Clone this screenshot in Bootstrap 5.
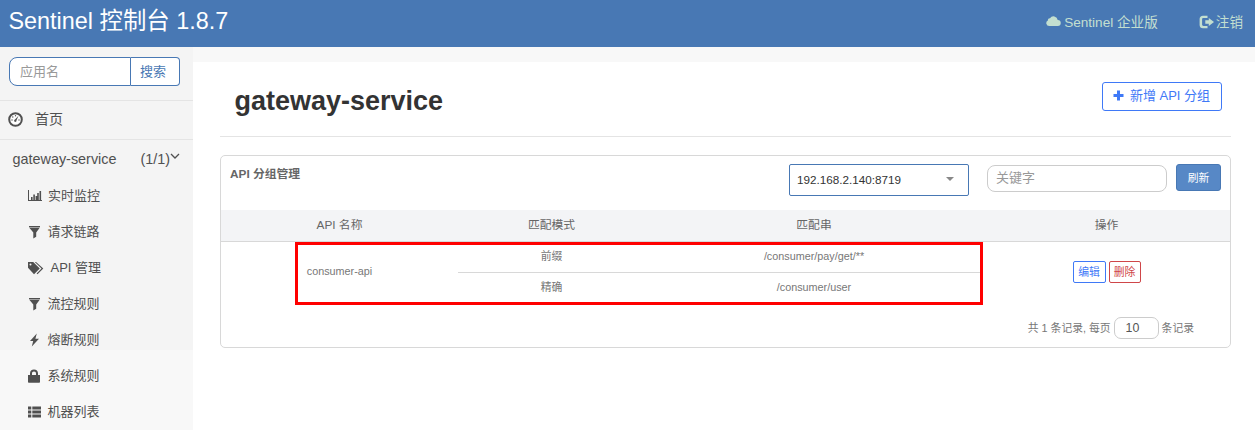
<!DOCTYPE html>
<html lang="zh-CN">
<head>
<meta charset="utf-8">
<meta name="viewport" content="width=device-width, initial-scale=1">
<title>Sentinel 控制台</title>
<link href="https://cdn.jsdelivr.net/npm/bootstrap@5.3.0/dist/css/bootstrap.min.css" rel="stylesheet">
<style>
body{font-family:"Liberation Sans","Noto Sans CJK SC",sans-serif;font-size:13px;color:#333;height:430px;overflow:hidden}
.topbar{background:#4878b4;height:47px;padding:0 11px 0 8.5px}
.brand{font-size:23.4px;line-height:42px;color:#fff}
.toplinks{font-size:13.6px;line-height:44px;height:44px;color:#c3dfd0;gap:41px;margin-top:1px;margin-right:1px}
.toplinks span{display:flex;align-items:center}
.icon-cloud{margin:-5px 3px 0 0}
.icon-out{margin:-2px 1px 0 0}
.side{width:193px;height:383px;background:linear-gradient(#f4f4f4 303px,#f8f8f8 303px);color:#505050}
.searchbox{padding:10px 13px 14px 9px;border-bottom:1px solid #e4e4e4}
.searchbox .form-control{height:29px;font-size:13px;border-color:#4878b4;border-radius:8px 0 0 8px;padding:0 10px 1px;width:122px;flex:none}
.searchbox .btn{height:29px;font-size:13px;border-color:#4878b4;border-left:0;color:#4878b4;background:#fff;border-radius:0 4px 4px 0;padding:0 4px 0 0;width:49px;flex:none;line-height:26px}
.form-control::placeholder{color:#999;opacity:1}
.home{height:39px;padding:0 0 2px 8px;font-size:14px;border-bottom:1px solid #e4e4e4;gap:12px}
.appname{height:38px;font-size:14.4px;padding:2px 13px 0 12.5px}
.appname svg{margin-top:-7px}
.menuitem{height:36px;padding:0 0 1px 27px}
.menuitem svg{margin-right:6.5px}
.menuitem svg.icon-chart{margin-right:5px}
.strip{height:15px;background:#f8f8f8}
.content-area{padding:0 24px 0 27px}
.titlebar{height:75px;border-bottom:1px solid #e4e4e4;padding:20px 9px 0 14.5px;margin-bottom:18px}
.titlebar h1{font-size:27px;font-weight:700;line-height:37px;margin:1px 0 0}
.btn-add{height:29px;width:120px;border:1px solid #3f79f7;color:#3f79f7;font-size:13px;border-radius:3px;padding:0 1px 2px 0;line-height:25px}
.panel{border:1px solid #d8d8d8;border-radius:5px;height:193px;position:relative;color:#666}
.panelhead{height:54px;padding:8px 9px 0}
.panelhead strong{font-size:11.8px;line-height:20px}
.picker{width:180px;height:32px;border:1px solid #4878b4;border-radius:2px;font-size:11.7px;color:#333;padding:0 14px 0 7px;margin-right:18px}
.caret-s{border:4.5px solid transparent;border-top-color:#888;border-bottom:0;border-top-width:4px;margin-bottom:3px}
.panelhead .form-control{width:180px;height:27px;border-color:#ccc;border-radius:8px;font-size:13px;padding:0 8px 3px;margin-right:9px;margin-top:1px}
.btn-refresh{width:45px;height:27px;font-size:10.8px;background:#5788c6;border:1px solid #4878b4;color:#fff;border-radius:3px;padding:0;line-height:24px}
.apis{table-layout:fixed;width:1009px;border-collapse:separate;border-spacing:0;text-align:center;font-size:10.8px}
.apis th{background:#f3f4f6;height:32px;font-weight:400;font-size:11.8px;border-bottom:1px solid #d8d8d8;padding:0 0 2px;line-height:18px}
.apis td{height:31px;padding:0 0 2px;line-height:16px;color:#777}
.apis td.group,.apis td.last{padding-bottom:4px}
.apis .split{border-bottom:1px solid #d8d8d8}
.ops .btn{width:33px;height:22px;font-size:10.8px;border-radius:2px;padding:0;line-height:20px;background:#fff}
.ops .btn-edit{border:1px solid #3f79f7;color:#3f79f7}
.ops .btn-del{width:32px;border:1px solid #cf4649;color:#cf4649}
.marker{position:absolute;left:74px;top:86px;width:688px;height:63px;border:3px solid #f00}
.pager{font-size:10.8px;color:#777;padding:13px 36px 0 0;gap:3px}
.pager .form-control{width:45px;height:22px;border-color:#ccc;border-radius:7px;font-size:12.4px;color:#555;padding:0 11px}
</style>
</head>
<body>
<nav class="topbar d-flex justify-content-between">
  <span class="brand">Sentinel 控制台 1.8.7</span>
  <div class="toplinks d-flex">
    <span><svg class="icon-cloud" width="15" height="14" viewBox="0 0 15 14" fill="currentColor"><path d="M3.200 12A2.900 2.900 0 0 1 1.900 6.500 2 2 0 0 1 4 4.300 4.200 4.200 0 0 1 11.700 6 3 3 0 0 1 11.800 12z"/></svg>Sentinel 企业版</span>
    <span><svg class="icon-out" width="16" height="14" viewBox="0 0 16 14" fill="currentColor"><path d="M8.500.8H4C1.800.8.6 2.100.6 4.100v5.800c0 2 1.200 3.300 3.400 3.300h4.500V11H4.500c-.9 0-1.400-.5-1.400-1.400V4.400C3.100 3.500 3.600 3 4.500 3h4zM9.800 2.900 15 7 9.800 11.100V8.700H6.300V5.300h3.500z"/></svg>注销</span>
  </div>
</nav>
<div class="d-flex">
  <aside class="side flex-shrink-0">
    <div class="searchbox d-flex"><input class="form-control" placeholder="应用名"><button class="btn">搜索</button></div>
    <div class="home d-flex align-items-center"><svg width="15" height="15" viewBox="0 0 15 15"><circle cx="7.500" cy="7.500" r="6.300" fill="#fff" stroke="#505050" stroke-width="2"/><g fill="#505050"><circle cx="4" cy="8" r=".7"/><circle cx="4.800" cy="5" r=".7"/><circle cx="7.500" cy="3.800" r=".7"/><circle cx="11" cy="8" r=".7"/><path d="m10.500 3.800-2 4.500a1.200 1.200 0 1 1-1.500-.8z"/></g></svg><span>首页</span></div>
    <div class="appname d-flex align-items-center justify-content-between"><span>gateway-service</span><span class="d-flex align-items-center">(1/1)<svg width="10" height="8" viewBox="0 0 10 8" fill="none" stroke="#505050" stroke-width="1.300"><path d="m1 2 4 4 4-4"/></svg></span></div>
    <div class="menuitem d-flex align-items-center"><svg class="icon-chart" width="16" height="13" viewBox="0 0 16 13" fill="#505050"><path d="M1 1h1v10h13v1H1zM4 8h1.600v3H4zM6.300 5.500h1.600V11H6.300zM8.600 7h1.600v4H8.600zM10.200 4h1.600v7h-1.600zM12.500 2h1.600v9h-1.600z"/></svg><span>实时监控</span></div>
    <div class="menuitem d-flex align-items-center"><svg width="14" height="14" viewBox="0 0 14 14" fill="#505050"><path d="M2 1h11v1.200H2zM2.300 2.800h10.400L9.200 7.500v4.200L6.300 13.500v-6z"/></svg><span>请求链路</span></div>
    <div class="menuitem d-flex align-items-center"><svg width="17" height="14" viewBox="0 0 17 14" fill="#505050"><path fill-rule="evenodd" d="M1 1h5.200l6.600 6.500L7 13.300 1 6.800zM3.500 2.600a1 1 0 1 0 .01 2 1 1 0 0 0-.01-2"/><path d="M7.800 1H9l7.300 6.500-5.800 5.800-.9-.8 4.900-5z"/></svg><span>API 管理</span></div>
    <div class="menuitem d-flex align-items-center"><svg width="14" height="14" viewBox="0 0 14 14" fill="#505050"><path d="M2 1h11v1.200H2zM2.300 2.800h10.400L9.200 7.500v4.200L6.300 13.500v-6z"/></svg><span>流控规则</span></div>
    <div class="menuitem d-flex align-items-center"><svg width="14" height="14" viewBox="0 0 14 14" fill="#505050"><path d="M9.800.5 3 7.900h3.200L4.800 13.500 12 5.700H8.400z"/></svg><span>熔断规则</span></div>
    <div class="menuitem d-flex align-items-center"><svg width="14" height="14" viewBox="0 0 14 14" fill="#505050"><path fill-rule="evenodd" d="M1 6h2V4.500C3 2 4.500.5 7 .5s4 1.500 4 4V6h2v7c0 .5-.3.800-.8.800H1.800c-.5 0-.8-.3-.8-.8zM5 6h4V4.500C9 3.200 8.300 2.500 7 2.500S5 3.200 5 4.500z"/></svg><span>系统规则</span></div>
    <div class="menuitem d-flex align-items-center"><svg width="14" height="14" viewBox="0 0 14 14" fill="#505050"><path d="M1 1.500h3.300v3H1zM5.300 1.500H14v3H5.300zM1 5.500h3.300v3H1zM5.300 5.500H14v3H5.300zM1 9.500h3.300v3H1zM5.300 9.500H14v3H5.300z"/></svg><span>机器列表</span></div>
  </aside>
  <main class="flex-grow-1">
    <div class="strip"></div>
    <div class="content-area">
      <div class="titlebar d-flex justify-content-between align-items-start">
        <h1>gateway-service</h1>
        <button class="btn btn-add d-flex align-items-center justify-content-center"><svg width="11" height="11" viewBox="0 0 11 11" fill="currentColor" style="margin-right:6px"><path d="M4 .5h3V4h3.500v3H7v3.500H4V7H.5V4H4z"/></svg>新增 API 分组</button>
      </div>
      <section class="panel">
        <div class="panelhead d-flex align-items-start">
          <strong class="me-auto">API 分组管理</strong>
          <div class="picker d-flex align-items-center justify-content-between"><span>192.168.2.140:8719</span><i class="caret-s"></i></div>
          <input class="form-control" placeholder="关键字">
          <button class="btn btn-refresh">刷新</button>
        </div>
        <table class="apis">
          <colgroup><col style="width:237px"><col style="width:187px"><col style="width:338px"><col></colgroup>
          <thead><tr><th>API 名称</th><th>匹配模式</th><th>匹配串</th><th>操作</th></tr></thead>
          <tbody>
            <tr><td rowspan="2" class="group">consumer-api</td><td class="split">前缀</td><td class="split">/consumer/pay/get/**</td><td rowspan="2" class="ops"><div class="d-flex justify-content-center" style="gap:3px"><button class="btn btn-edit">编辑</button><button class="btn btn-del">删除</button></div></td></tr>
            <tr><td class="last">精确</td><td class="last">/consumer/user</td></tr>
          </tbody>
        </table>
        <div class="marker"></div>
        <div class="pager d-flex align-items-center justify-content-end"><span>共 1 条记录, 每页</span><input class="form-control" value="10"><span>条记录</span></div>
      </section>
    </div>
  </main>
</div>
<script src="https://cdn.jsdelivr.net/npm/bootstrap@5.3.0/dist/js/bootstrap.bundle.min.js"></script>
</body>
</html>
